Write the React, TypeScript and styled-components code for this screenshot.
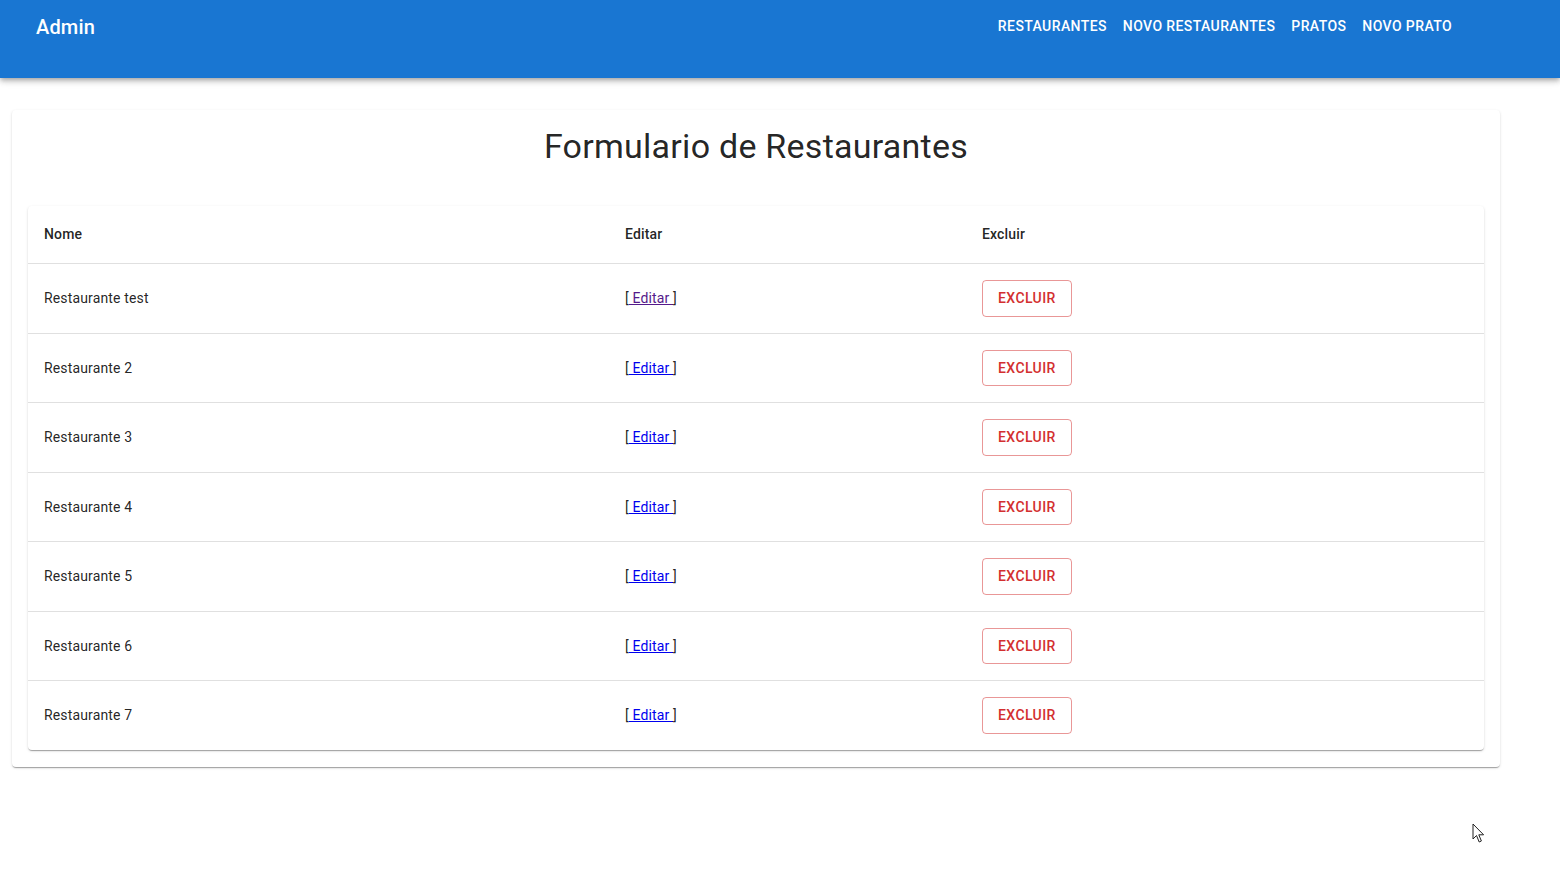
import styled, { createGlobalStyle } from 'styled-components';

const GlobalStyle = createGlobalStyle`
  body {
    margin: 0;
    background: #fff;
    font-family: Roboto, "Liberation Sans", Arial, sans-serif;
    -webkit-font-smoothing: antialiased;
  }
`;

const Page = styled.div`
  position: relative;
  min-height: 880px;
  overflow: hidden;
`;

const AppBar = styled.header`
  display: flex;
  align-items: flex-start;
  justify-content: space-between;
  box-sizing: border-box;
  height: 78px;
  padding: 8px 100px 0 36px;
  background-color: #1976d2;
  color: #fff;
  box-shadow:
    0px 2px 4px -1px rgba(0, 0, 0, 0.2),
    0px 4px 5px 0px rgba(0, 0, 0, 0.14),
    0px 1px 10px 0px rgba(0, 0, 0, 0.12);
`;

const Brand = styled.h6`
  margin: 3px 0 0;
  font-size: 20px;
  font-weight: 500;
  line-height: 32px;
  letter-spacing: 0.0075em;
`;

const Nav = styled.nav`
  display: flex;
`;

const NavButton = styled.a`
  padding: 6px 8px;
  font-size: 14px;
  font-weight: 500;
  line-height: 24.5px;
  letter-spacing: 0.02857em;
  text-transform: uppercase;
  color: #fff;
  text-decoration: none;
  border-radius: 4px;
  cursor: pointer;
`;

const Card = styled.section`
  margin: 32px 60px 0 12px;
  padding: 15px 16px 17px;
  background: #fff;
  border-radius: 4px;
  box-shadow:
    0px 2px 1px -1px rgba(0, 0, 0, 0.2),
    0px 1px 1px 0px rgba(0, 0, 0, 0.14),
    0px 1px 3px 0px rgba(0, 0, 0, 0.12);
`;

const Title = styled.h1`
  margin: 0 0 39px;
  text-align: center;
  font-size: 34px;
  font-weight: 400;
  line-height: 42px;
  letter-spacing: 0.00735em;
  color: rgba(0, 0, 0, 0.87);
`;

const TableWrap = styled.div`
  background: #fff;
  border-radius: 4px;
  overflow: hidden;
  box-shadow:
    0px 2px 1px -1px rgba(0, 0, 0, 0.2),
    0px 1px 1px 0px rgba(0, 0, 0, 0.14),
    0px 1px 3px 0px rgba(0, 0, 0, 0.12);
`;

const Table = styled.table`
  width: 100%;
  border-collapse: collapse;
  table-layout: fixed;
`;

const Row = styled.tr`
  &:last-child td {
    border-bottom: 0;
  }
`;

const Cell = styled.td<{ head?: boolean; width?: number }>`
  padding: 16px;
  text-align: left;
  font-size: 14px;
  font-weight: ${({ head }) => (head ? 500 : 400)};
  line-height: ${({ head }) => (head ? '25px' : '24px')};
  letter-spacing: 0.01071em;
  color: rgba(0, 0, 0, 0.87);
  border-bottom: 1px solid rgb(224, 224, 224);
  width: ${({ width }) => (width ? `${width}px` : 'auto')};
`;

const EditLink = styled.a<{ visited?: boolean }>`
  color: ${({ visited }) => (visited ? '#551a8b' : '#0000ee')};
  text-decoration: underline;
`;

const DeleteButton = styled.button`
  box-sizing: border-box;
  min-width: 64px;
  padding: 5px 15px;
  font-family: inherit;
  font-size: 14px;
  font-weight: 500;
  line-height: 24.5px;
  letter-spacing: 0.02857em;
  text-transform: uppercase;
  color: #d32f2f;
  background: transparent;
  border: 1px solid rgba(211, 47, 47, 0.5);
  border-radius: 4px;
  cursor: pointer;
`;

const Cursor = styled.svg`
  position: absolute;
  left: 1472px;
  top: 823px;
`;

const restaurantes = [
  'Restaurante test',
  'Restaurante 2',
  'Restaurante 3',
  'Restaurante 4',
  'Restaurante 5',
  'Restaurante 6',
  'Restaurante 7',
];

const links = ['Restaurantes', 'Novo Restaurantes', 'Pratos', 'Novo Prato'];

export default function App() {
  return (
    <Page>
      <GlobalStyle />
      <AppBar>
        <Brand>Admin</Brand>
        <Nav>
          {links.map((link) => (
            <NavButton key={link}>{link}</NavButton>
          ))}
        </Nav>
      </AppBar>
      <Card>
        <Title>Formulario de Restaurantes</Title>
        <TableWrap>
          <Table>
            <thead>
              <tr>
                <Cell as="th" head width={549}>
                  Nome
                </Cell>
                <Cell as="th" head width={325}>
                  Editar
                </Cell>
                <Cell as="th" head>
                  Excluir
                </Cell>
              </tr>
            </thead>
            <tbody>
              {restaurantes.map((nome, i) => (
                <Row key={nome}>
                  <Cell>{nome}</Cell>
                  <Cell>
                    [<EditLink href="#" visited={i === 0}> Editar </EditLink>]
                  </Cell>
                  <Cell>
                    <DeleteButton>Excluir</DeleteButton>
                  </Cell>
                </Row>
              ))}
            </tbody>
          </Table>
        </TableWrap>
      </Card>
      <Cursor width="14" height="21" viewBox="0 0 14 21">
        <path
          d="M1 1 L1 16 L4.5 12.5 L7.2 19 L9.4 18 L6.8 11.8 L11.6 11.8 Z"
          fill="#fff"
          stroke="#222"
          strokeWidth="1"
          strokeLinejoin="round"
        />
      </Cursor>
    </Page>
  );
}
